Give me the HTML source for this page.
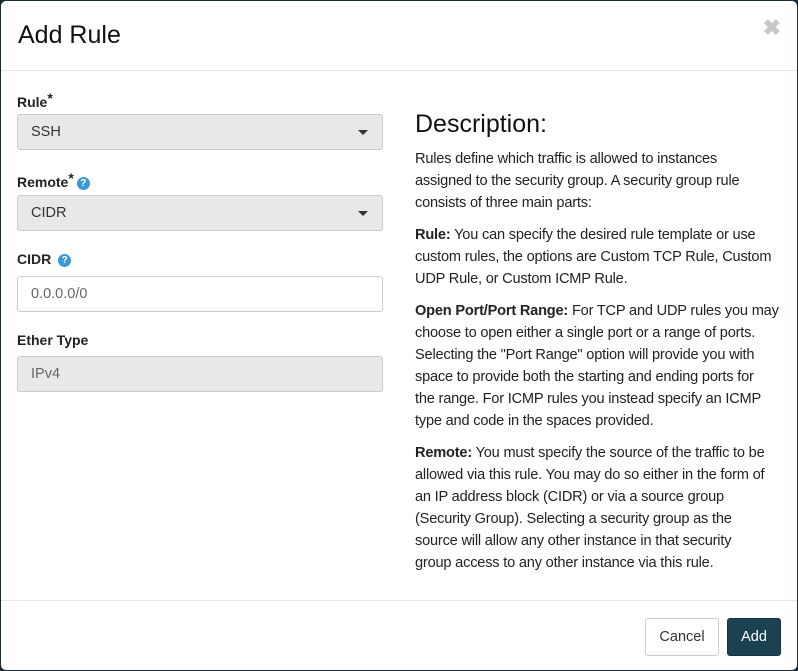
<!DOCTYPE html>
<html><head><meta charset="utf-8"><style>
*{box-sizing:border-box;margin:0;padding:0}
body{width:798px;height:671px;background:#1b2a33;font-family:"Liberation Sans",sans-serif;color:#222;overflow:hidden;position:relative}
.m{position:absolute;left:1px;top:1px;width:796px;height:669px;background:#fff;border-radius:5px}
.hd{height:70px;border-bottom:1px solid #e5e5e5;position:relative}
.hd h4{position:absolute;left:17px;top:20px;font-size:25px;font-weight:normal;color:#111}
.x{position:absolute;right:16px;top:14px;font-size:22px;color:#c8c8c8;font-weight:bold}
.lbl{position:absolute;left:16px;font-size:14px;font-weight:bold;color:#222}
.lbl sup{font-size:14px;vertical-align:4px}
.q{display:inline-block;width:13px;height:13px;border-radius:50%;background:#3a9ad9;color:#fff;font-size:10px;text-align:center;line-height:13px;vertical-align:1px;margin-left:3px}
.in{position:absolute;left:16px;width:366px;height:36px;border:1px solid #ccc;border-radius:3px;font-size:14.5px;padding:0 0 0 13px;line-height:34px;color:#333}
.g{background:#e6e8e9}
.car{position:absolute;right:14px;top:15px;border-left:5px solid transparent;border-right:5px solid transparent;border-top:5px solid #333}
.d{position:absolute;left:414px;top:109px;width:380px}
.d h3{font-size:25px;font-weight:normal;color:#111;margin-bottom:9px}
.d p{font-size:14.6px;line-height:22px;margin-bottom:10px;white-space:nowrap;color:#222;letter-spacing:-0.2px}
.ft{position:absolute;left:0;top:599px;width:796px;border-top:1px solid #e5e5e5}
.b{position:absolute;top:617px;height:38px;border-radius:3px;font-size:14.5px;text-align:center;line-height:36px}
</style></head><body><div class="m">
<div class="hd"><h4>Add Rule</h4><div class="x">✖</div></div>
<div class="lbl" style="top:89px">Rule<sup>*</sup></div>
<div class="in g" style="top:113px">SSH<div class="car"></div></div>
<div class="lbl" style="top:169px">Remote<sup>*</sup><span class="q">?</span></div>
<div class="in g" style="top:194px">CIDR<div class="car"></div></div>
<div class="lbl" style="top:250px">CIDR <span class="q">?</span></div>
<div class="in" style="top:275px;color:#666">0.0.0.0/0</div>
<div class="lbl" style="top:331px">Ether Type</div>
<div class="in g" style="top:355px;color:#666">IPv4</div>
<div class="d"><h3>Description:</h3>
<p>Rules define which traffic is allowed to instances<br>assigned to the security group. A security group rule<br>consists of three main parts:</p>
<p><b>Rule:</b> You can specify the desired rule template or use<br>custom rules, the options are Custom TCP Rule, Custom<br>UDP Rule, or Custom ICMP Rule.</p>
<p><b>Open Port/Port Range:</b> For TCP and UDP rules you may<br>choose to open either a single port or a range of ports.<br>Selecting the "Port Range" option will provide you with<br>space to provide both the starting and ending ports for<br>the range. For ICMP rules you instead specify an ICMP<br>type and code in the spaces provided.</p>
<p><b>Remote:</b> You must specify the source of the traffic to be<br>allowed via this rule. You may do so either in the form of<br>an IP address block (CIDR) or via a source group<br>(Security Group). Selecting a security group as the<br>source will allow any other instance in that security<br>group access to any other instance via this rule.</p>
</div>
<div class="ft"></div>
<div class="b" style="left:644px;width:74px;border:1px solid #ccc;color:#333">Cancel</div>
<div class="b" style="left:726px;width:54px;background:#1c4150;color:#fff;border:1px solid #163541">Add</div>
</div></body></html>
